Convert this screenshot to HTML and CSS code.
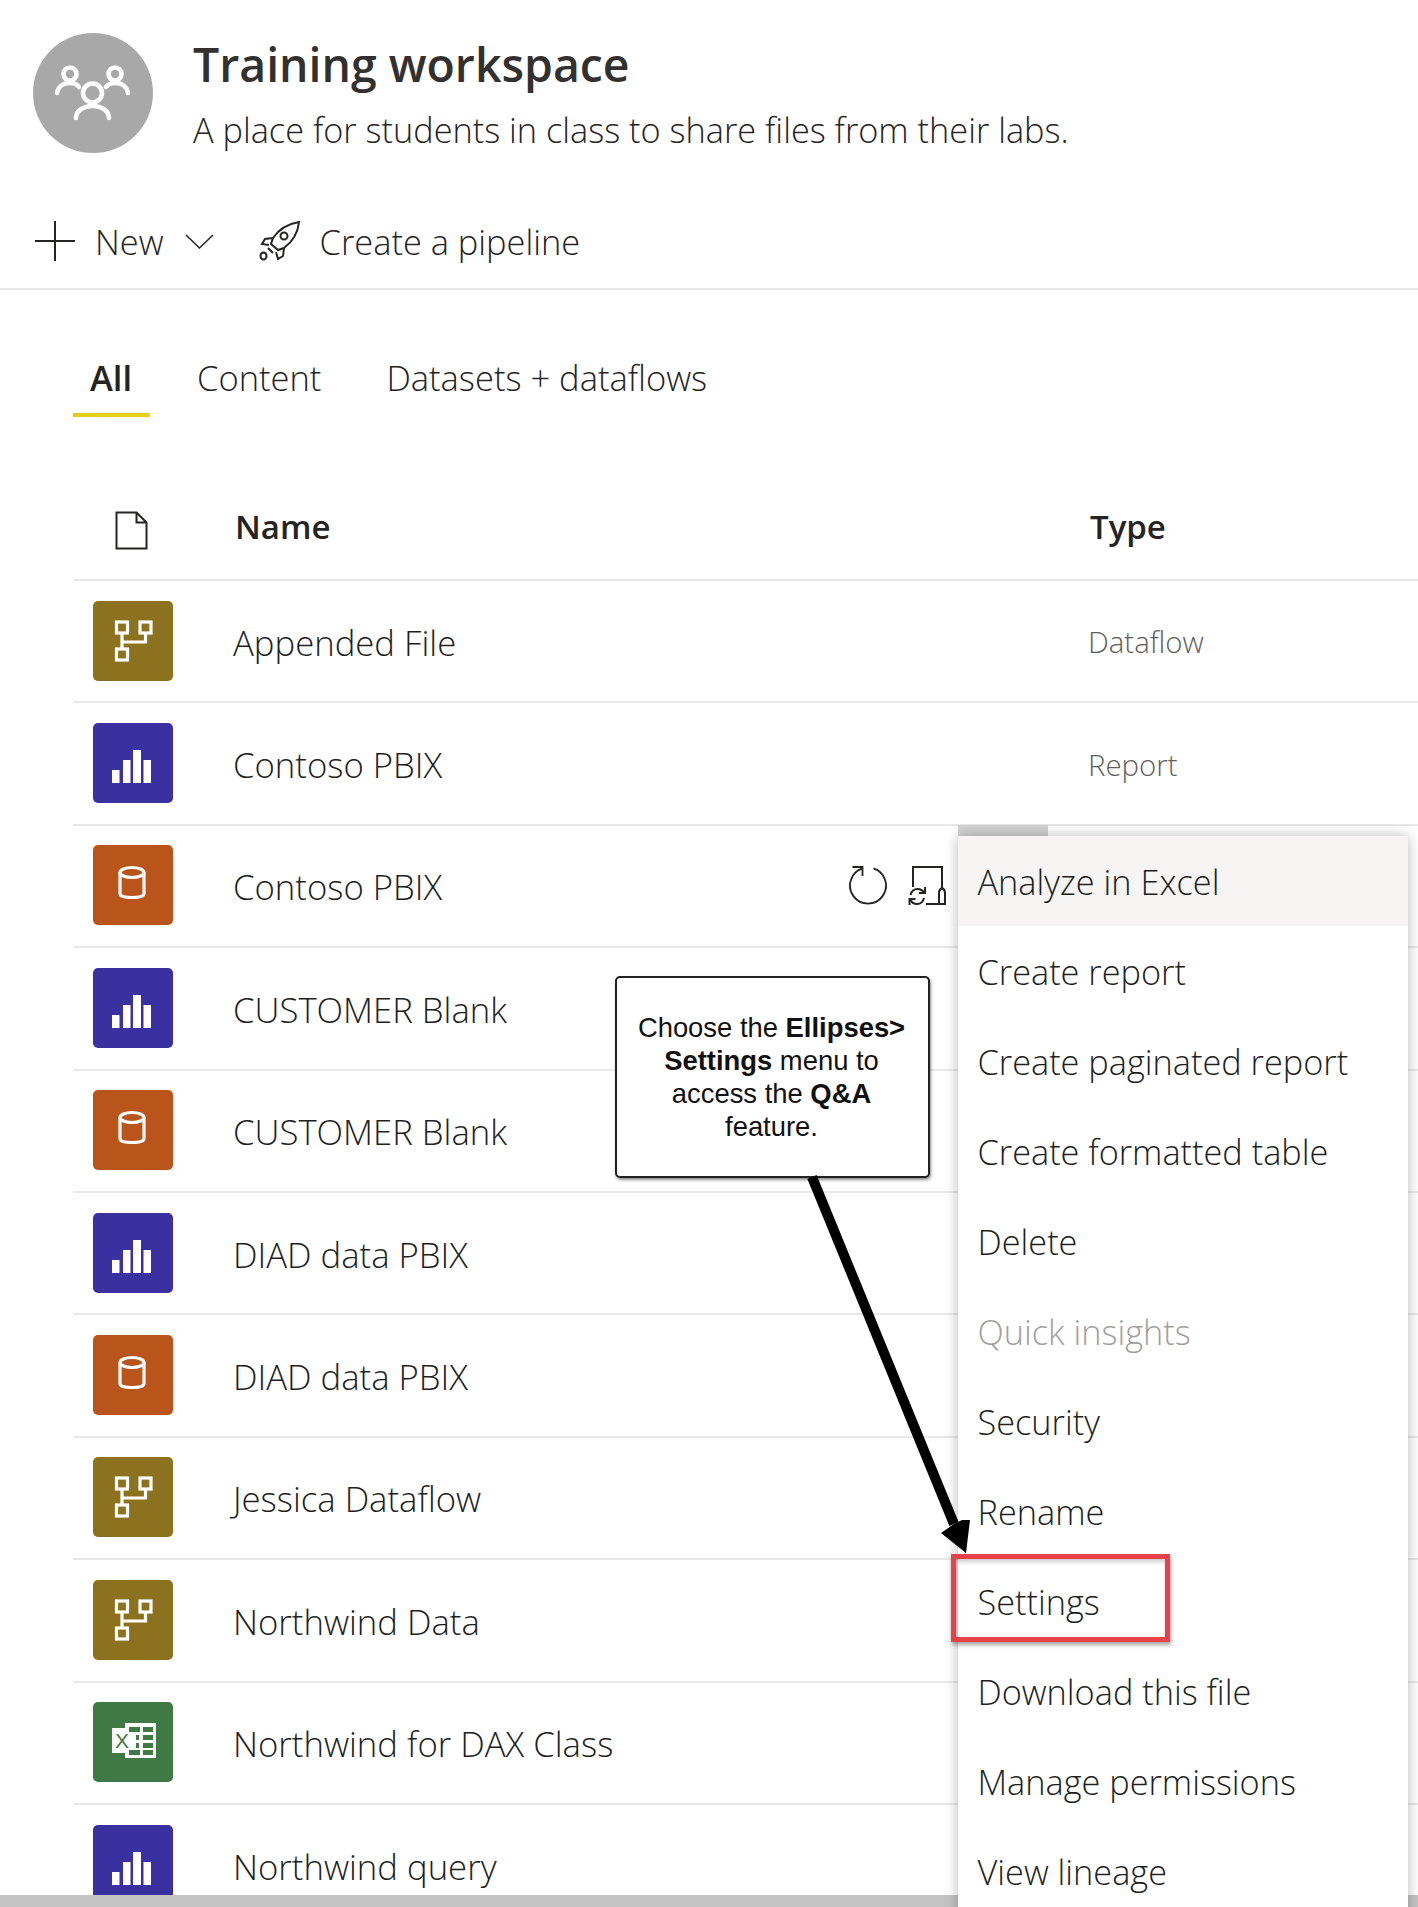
FILE: index.html
```html
<!DOCTYPE html>
<html lang="en">
<head>
<meta charset="utf-8">
<title>Training workspace</title>
<link rel="stylesheet" href="styles.css">
</head>
<body>
<svg class="defs" width="0" height="0" aria-hidden="true">
  <symbol id="i-flow" viewBox="0 0 80 80"><g fill="none" stroke="#fff" stroke-width="3.2"><rect x="23.500" y="21" width="11" height="11"/><rect x="47" y="21" width="11" height="11"/><rect x="23.500" y="48" width="11" height="11"/><path d="M29 32v16M29 41h23.500V32"/></g></symbol>
  <symbol id="i-report" viewBox="0 0 80 80"><g fill="#fff"><rect x="19" y="47" width="7.500" height="13"/><rect x="30" y="37" width="7.500" height="23"/><rect x="40" y="27" width="8" height="33"/><rect x="50.500" y="37" width="7.500" height="23"/></g></symbol>
  <symbol id="i-data" viewBox="0 0 80 80"><g fill="none" stroke="#fff" stroke-width="3.200"><ellipse cx="39" cy="27.500" rx="12" ry="5"/><path d="M27 27.500v21c0 3 5 4 12 4s12-1 12-4v-21"/></g></symbol>
</svg>

<div class="page">
  <header class="head">
    <div class="avatar">
      <svg viewBox="0 0 120 120" width="120" height="120"><g fill="none" stroke="#fff" stroke-width="4.600" stroke-linecap="round"><circle cx="37" cy="41" r="6.500"/><circle cx="82" cy="41" r="6.500"/><circle cx="59.500" cy="60" r="9.500"/><path d="M43 85c0-7 7-12 16.500-12S76 78 76 85"/><path d="M24 60c1-6 6-10 13-10 4 0 7 1 9 4"/><path d="M95 60c-1-6-6-10-13-10-4 0-7 1-9 4"/></g></svg>
    </div>
    <div class="titles">
      <h1 class="title">Training workspace</h1>
      <p class="subtitle">A place for students in class to share files from their labs.</p>
    </div>
  </header>

  <nav class="toolbar">
    <svg class="tool-plus" viewBox="0 0 40 40" width="40" height="40"><path d="M20 0v40M0 20h40" stroke="#252423" stroke-width="2" fill="none"/></svg>
    <span class="tool-new">New</span>
    <svg class="tool-chev" viewBox="0 0 29 15" width="29" height="15"><path d="M1 1l13.500 13L28 1" stroke="#252423" stroke-width="1.500" fill="none"/></svg>
    <svg class="tool-rocket" viewBox="0 0 41 40" width="41" height="40"><g fill="none" stroke="#252423" stroke-width="2"><path d="M40 1C28 3 20 8 14 17l-2 6 7 6 6-2c8-6 14-15 15-26z"/><circle cx="25" cy="15" r="3.500"/><path d="M14 17l-8 1-3 5 7 1M25 27l-1 8-5 3-2-7M9 27l5 5"/><ellipse cx="4.500" cy="35" rx="3" ry="3.500"/></g></svg>
    <span class="tool-pipe">Create a pipeline</span>
  </nav>

  <div class="tabs">
    <span class="tab tab-on">All</span>
    <span class="tab tab-content">Content</span>
    <span class="tab tab-data">Datasets + dataflows</span>
  </div>

  <section class="table">
    <div class="thead">
      <svg class="file-ic" viewBox="0 0 33 39" width="33" height="39"><path d="M1.500 1.500h20l10 10v26h-30zM21.500 1.500v10h10" fill="none" stroke="#252423" stroke-width="2"/></svg>
      <span class="th-name">Name</span>
      <span class="th-type">Type</span>
    </div>
    <div class="row"><span class="tile t-flow"><svg><use href="#i-flow"/></svg></span><span class="name">Appended File</span><span class="type">Dataflow</span></div>
    <div class="row"><span class="tile t-report"><svg><use href="#i-report"/></svg></span><span class="name">Contoso PBIX</span><span class="type">Report</span></div>
    <div class="row"><span class="tile t-data"><svg><use href="#i-data"/></svg></span><span class="name">Contoso PBIX</span></div>
    <div class="row"><span class="tile t-report"><svg><use href="#i-report"/></svg></span><span class="name">CUSTOMER Blank</span></div>
    <div class="row"><span class="tile t-data"><svg><use href="#i-data"/></svg></span><span class="name">CUSTOMER Blank</span></div>
    <div class="row"><span class="tile t-report"><svg><use href="#i-report"/></svg></span><span class="name">DIAD data PBIX</span></div>
    <div class="row"><span class="tile t-data"><svg><use href="#i-data"/></svg></span><span class="name">DIAD data PBIX</span></div>
    <div class="row"><span class="tile t-flow"><svg><use href="#i-flow"/></svg></span><span class="name">Jessica Dataflow</span></div>
    <div class="row"><span class="tile t-flow"><svg><use href="#i-flow"/></svg></span><span class="name">Northwind Data</span></div>
    <div class="row"><span class="tile t-excel"><svg viewBox="0 0 80 80"><path fill="#fff" d="M32 21h31v35H32v-5H19V26h13z"/><g fill="#3f7a45"><rect x="36" y="25" width="11" height="5"/><rect x="50" y="25" width="10" height="5"/><rect x="50" y="33" width="10" height="5"/><rect x="50" y="41" width="10" height="5"/><rect x="36" y="48" width="11" height="5"/><rect x="50" y="48" width="10" height="5"/><rect x="43" y="33" width="3" height="5"/><rect x="43" y="41" width="3" height="5"/></g><text class="xl" x="22" y="46">X</text></svg></span><span class="name">Northwind for DAX Class</span></div>
    <div class="row"><span class="tile t-report"><svg><use href="#i-report"/></svg></span><span class="name">Northwind query</span></div>
  </section>

  <div class="scrollbar"></div>

  <div class="row-actions">
    <svg viewBox="0 0 40 40" width="40" height="40"><g fill="none" stroke="#252423" stroke-width="1.800"><path d="M25.500 2.400A18 18 0 1 1 14.500 2.400"/><path d="M4.500 1h10v9"/></g></svg>
    <svg viewBox="0 0 38 40" width="38" height="40"><g fill="none" stroke="#252423" stroke-width="2"><path d="M5 21V1h29v21"/><path d="M18 38h19V27c0-2-1-4-3-5-2 1-3 3-3 5v11"/><path d="M2.500 29c1-4 4-6 7-6 3 0 5 1 7 4M16 32c-1 4-4 6-7 6-3 0-5-1-6.500-4"/><path d="M17 21v6h-6M1.500 39v-6h6"/></g></svg>
  </div>

  <div class="menu-tab"></div>
  <ul class="menu">
    <li class="item item-hover">Analyze in Excel</li>
    <li class="item">Create report</li>
    <li class="item">Create paginated report</li>
    <li class="item">Create formatted table</li>
    <li class="item">Delete</li>
    <li class="item item-off">Quick insights</li>
    <li class="item">Security</li>
    <li class="item">Rename</li>
    <li class="item">Settings</li>
    <li class="item">Download this file</li>
    <li class="item">Manage permissions</li>
    <li class="item">View lineage</li>
  </ul>

  <div class="callout">Choose the <b>Ellipses&gt;</b><br><b>Settings</b> menu to<br>access the <b>Q&amp;A</b><br>feature.</div>

  <svg class="arrow" viewBox="0 0 180 400" width="180" height="400"><path d="M5 2L147 349" stroke="#000" stroke-width="10" fill="none"/><path d="M159 378L134 358 147 349 155 345 163 345z" fill="#000"/></svg>

  <div class="redbox"></div>
</div>
</body>
</html>
```

FILE: styles.css
```css
* { box-sizing: border-box; }
html, body { margin: 0; padding: 0; background: #fff; }
body { font-family: "Open Sans", "Noto Sans", sans-serif; color: #252423; }
.defs { position: absolute; }
.xl { font-family: "Liberation Sans", sans-serif; font-size: 21px; fill: #3f7a45; }

.page { position: relative; width: 1418px; height: 1907px; overflow: hidden; }

.head { display: flex; align-items: flex-start; padding: 33px 0 0 33px; height: 203px; }
.avatar { width: 120px; height: 120px; border-radius: 50%; background: #a8a8a8; flex: none; }
.avatar svg { display: block; }
.titles { margin-left: 40px; }
.title { margin: 0; font-size: 46.400px; line-height: 62px; font-weight: 600; color: #323130; }
.subtitle { margin: 12px 0 0; font-size: 34.300px; line-height: 46px; font-weight: 300; color: #252423; }

.toolbar { display: flex; align-items: center; height: 87px; padding: 0 0 9px 35px; border-bottom: 2px solid #e8e8e8; font-size: 34.400px; font-weight: 300; }
.tool-new { margin-left: 20px; }
.tool-chev { margin-left: 21px; }
.tool-rocket { margin-left: 45px; }
.tool-pipe { margin-left: 20px; }

.tabs { display: flex; height: 128px; margin-left: 73px; padding-top: 65px; font-size: 34.500px; font-weight: 300; line-height: 46px; }
.tab { display: block; }
.tab-on { width: 77px; height: 62px; padding-left: 17px; border-bottom: 4px solid #e6cf17; font-weight: 600; }
.tab-content { margin-left: 47px; }
.tab-data { margin-left: 65px; }

.thead { display: flex; align-items: center; height: 163px; margin-left: 73px; padding-top: 66px; border-bottom: 2px solid #e8e8e8; font-weight: 600; font-size: 33px; }
.file-ic { margin-left: 42px; margin-bottom: 2px; flex: none; }
.th-name { width: 855px; margin-left: 87px; margin-bottom: 10px; flex: none; }
.th-type { margin-bottom: 10px; }

.row { display: flex; align-items: center; height: 122.400px; margin-left: 73px; border-bottom: 2px solid #e8e8e8; }
.tile { display: block; width: 80px; height: 80px; margin-left: 20px; margin-bottom: 1px; border-radius: 5px; flex: none; }
.tile svg { display: block; width: 80px; height: 80px; }
.t-flow { background: #8c711f; }
.t-report { background: #3a30a0; }
.t-data { background: #b9541b; }
.t-excel { background: #3f7a45; }
.name { margin-left: 60px; padding-top: 2px; width: 855px; flex: none; font-size: 34.700px; font-weight: 300; color: #201f1e; }
.type { padding-top: 2px; font-size: 29.400px; font-weight: 300; color: #605e5c; }

.scrollbar { position: absolute; left: 0; right: 0; bottom: 0; height: 12px; background: #c4c4c4; }

.row-actions { position: absolute; left: 848px; top: 866px; display: flex; gap: 20px; }
.menu-tab { position: absolute; left: 958px; top: 825px; width: 90px; height: 12px; background: #d2d2d2; }
.menu { position: absolute; left: 958px; top: 836px; width: 450px; margin: 0; padding: 0; list-style: none; background: #fff; border-radius: 4px 4px 0 0; box-shadow: 0 0 14px rgba(0,0,0,.28); height: 1100px; }
.item { height: 90px; line-height: 91px; padding-left: 19.500px; font-size: 34.300px; font-weight: 300; color: #201f1e; }
.item-hover { background: #f6f5f3; }
.item-off { color: #a19f9d; }

.callout { position: absolute; left: 615px; top: 976px; width: 315px; height: 202px; padding: 33px 2px 0 0; border: 2px solid #222; border-radius: 5px; background: #fff; box-shadow: 1px 2px 3px rgba(0,0,0,.45); font-family: "Liberation Sans", Arial, sans-serif; font-size: 27.400px; line-height: 33px; text-align: center; color: #111; }

.arrow { position: absolute; left: 807px; top: 1175px; }
.redbox { position: absolute; left: 951px; top: 1554px; width: 219px; height: 88px; border: 5px solid #ea4148; box-shadow: 1px 3px 4px rgba(0,0,0,.35), inset 1px 3px 4px rgba(0,0,0,.2); }
```
